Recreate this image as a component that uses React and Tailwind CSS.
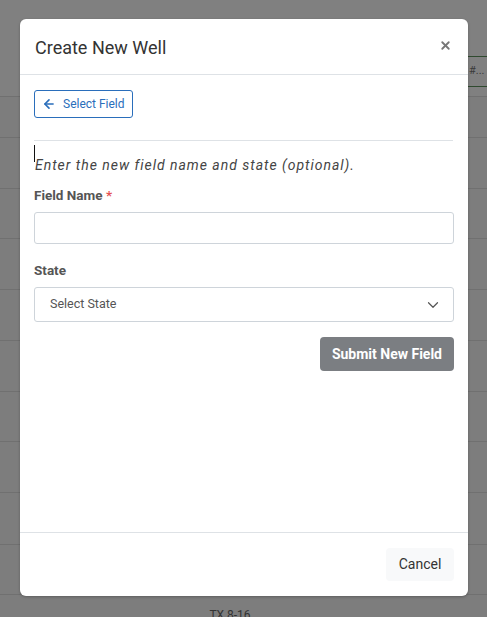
import { ArrowLeft, X, ChevronDown } from 'lucide-react'

const rowHeights = [51, 50, 51, 51, 51, 50, 51, 52, 50]

function Backdrop() {
  return (
    <div className="absolute inset-0 bg-[#7d7d7d]">
      {/* header of the table behind the overlay */}
      <div className="relative h-[97px] border-b border-[#707070] bg-[#808080]">
        <div className="absolute left-[466px] right-0 top-[56px] h-[31px] border-y border-[#2f4a2f] flex items-center pl-[3px] text-[11px] text-[#3a3a3a]">
          #...
        </div>
      </div>
      <div className="h-[41px] border-b border-[#707070]" />
      {rowHeights.map((h, i) => (
        <div key={i} className="border-b border-[#707070]" style={{ height: h }} />
      ))}
      <div className="w-[460px] text-center text-[12px] text-[#333] pt-[11px]">TX 8-16</div>
    </div>
  )
}

export default function App() {
  return (
    <div className="relative w-[487px] h-[617px] overflow-hidden" style={{ fontFamily: 'Roboto, "Liberation Sans", sans-serif' }}>
      <Backdrop />

      <div className="absolute left-[20px] top-[19px] w-[448px] h-[577px] bg-white rounded-[6px] flex flex-col shadow-[0_1px_3px_rgba(0,0,0,0.25)]">
        {/* Header */}
        <div className="h-[56px] flex items-center justify-between px-[15px] border-b border-[#dee2e6]">
          <h2 className="text-[18px] text-[#333] font-normal pt-[1px]">Create New Well</h2>
          <X size={13} strokeWidth={3.4} className="text-[#777] mr-[1px] -mt-[2px]" />
        </div>

        {/* Body */}
        <div className="flex-1 px-[14px] pt-[15px]">
          <button className="h-[28px] px-[7px] flex items-center gap-[7px] border border-[#2a6ebb] rounded-[3px] text-[12px] text-[#2a6ebb]">
            <ArrowLeft size={14} strokeWidth={2.8} />
            Select Field
          </button>

          <div className="mt-[22px] border-t border-[#dee2e6] w-[419px]" />

          <div className="relative pt-[15px]">
            <span className="absolute left-[0px] top-[4px] w-[1px] h-[17px] bg-[#111]" />
            <p className="italic text-[14px] tracking-[0.07em] text-[#444] leading-[18px] pl-[1px]">
              Enter the new field name and state (optional).
            </p>
          </div>

          <label className="block mt-[13px] text-[13.5px] font-bold text-[#555] leading-[16px]">
            Field Name <span className="text-[#e55353]">*</span>
          </label>
          <input className="mt-[9px] block w-[420px] h-[32px] border border-[#ced4da] rounded-[3px] outline-none" />

          <label className="block mt-[18px] text-[13.5px] font-bold text-[#555] leading-[16px]">State</label>
          <div className="mt-[9px] w-[420px] h-[35px] border border-[#ced4da] rounded-[3px] flex items-center justify-between pl-[15px] pr-[11px]">
            <span className="text-[12.5px] text-[#555]">Select State</span>
            <ChevronDown size={18} strokeWidth={1.6} className="text-[#555]" />
          </div>

          <div className="flex justify-end w-[420px] mt-[15px]">
            <button className="h-[34px] px-[12px] rounded-[4px] bg-[#7b7e82] text-white text-[14px] font-bold">
              Submit New Field
            </button>
          </div>
        </div>

        {/* Footer */}
        <div className="h-[64px] border-t border-[#dee2e6] flex items-center justify-end pr-[14px]">
          <button className="h-[33px] w-[68px] rounded-[4px] bg-[#f8f9fa] text-[14px] text-[#333]">Cancel</button>
        </div>
      </div>
    </div>
  )
}
